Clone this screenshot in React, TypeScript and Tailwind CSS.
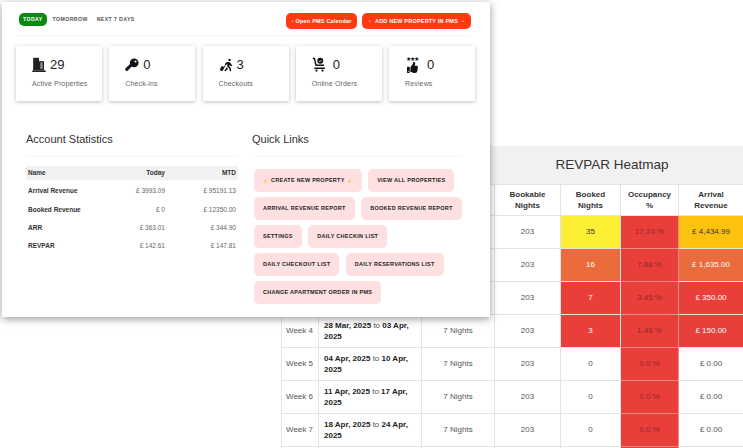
import React from 'react';
import { FaThumbsUp } from 'react-icons/fa';
import { FaPersonWalkingLuggage } from 'react-icons/fa6';

const BuildingIcon = () => (
  <svg viewBox="0 0 16 18" className="w-[14px] h-[15px]" fill="#222">
    <path d="M1 1h7v15H1z" />
    <path d="M8 5h6v11H8z" />
    <path d="M9.5 6.5h3v8h-3z" fill="#888" />
    <path d="M0 16h16v2H0z" />
  </svg>
);

const KeyIcon = () => (
  <svg viewBox="0 0 16 16" className="w-[14px] h-[14px]" fill="#111">
    <circle cx="10.5" cy="5.5" r="5" />
    <circle cx="12" cy="4" r="1.2" fill="#fff" />
    <path d="M7 8L2 13" stroke="#111" strokeWidth="3.4" strokeLinecap="round" />
  </svg>
);

const CartIcon = () => (
  <svg viewBox="0 0 20 20" className="w-[15px] h-[15px]" fill="#111">
    <path d="M1 1h3l2 9h10v2H4.5L2.5 3H1z" />
    <circle cx="11" cy="5" r="4" />
    <path d="M9 5l1.5 1.5L13 4" stroke="#fff" strokeWidth="1" fill="none" />
    <rect x="3" y="14" width="14" height="2" />
    <circle cx="6" cy="18" r="1.5" />
    <circle cx="14" cy="18" r="1.5" />
  </svg>
);

const ReviewIcon = () => (
  <div className="flex flex-col items-center w-[14px]">
    <div className="text-[6px] leading-[5px] text-[#111] tracking-[-1px]">★★★</div>
    <FaThumbsUp className="text-[#111] text-[11px]" />
  </div>
);

const Sparkle = () => (
  <svg viewBox="0 0 12 12" className="w-[6px] h-[6px] shrink-0" fill="#f5c542">
    <path d="M5 2l1.2 3.3L9.5 6.5 6.2 7.7 5 11 3.8 7.7.5 6.5l3.3-1.2z" />
    <path d="M10 0l.6 1.4L12 2l-1.4.6L10 4l-.6-1.4L8 2l1.4-.6z" />
  </svg>
);

const stats = [
  { icon: <BuildingIcon />, value: '29', label: 'Active Properties', iconBox: 'w-[18px]' },
  { icon: <KeyIcon />, value: '0', label: 'Check-ins', iconBox: 'w-[18px]' },
  { icon: <FaPersonWalkingLuggage className="text-[#111] text-[14px]" />, value: '3', label: 'Checkouts', iconBox: 'w-[18px]' },
  { icon: <CartIcon />, value: '0', label: 'Online Orders', iconBox: 'w-[21px]' },
  { icon: <ReviewIcon />, value: '0', label: 'Reviews', iconBox: 'w-[22px]' },
];

const accountRows = [
  ['Arrival Revenue', '£ 3993.09', '£ 95191.13'],
  ['Booked Revenue', '£ 0', '£ 12350.00'],
  ['ARR', '£ 363.01', '£ 344.90'],
  ['REVPAR', '£ 142.61', '£ 147.81'],
];

const quickLinks = [
  ['CREATE NEW PROPERTY', 'VIEW ALL PROPERTIES'],
  ['ARRIVAL REVENUE REPORT', 'BOOKED REVENUE REPORT'],
  ['SETTINGS', 'DAILY CHECKIN LIST'],
  ['DAILY CHECKOUT LIST', 'DAILY RESERVATIONS LIST'],
  ['CHANGE APARTMENT ORDER IN PMS'],
];

const RED = 'bg-[#e93e3a] border-[#f08a86]';

const heatRows = [
  { week: 'Week 1', from: '07 Mar, 2025', to: '13 Mar,', booked: '35', bookedBg: 'bg-[#fdef33] text-[#333]', occ: '17.24 %', rev: '£ 4,434.99', revBg: 'bg-[#fdc20d] text-[#333]' },
  { week: 'Week 2', from: '14 Mar, 2025', to: '20 Mar,', booked: '16', bookedBg: 'bg-[#ea6b3c] text-white', occ: '7.88 %', rev: '£ 1,635.00', revBg: 'bg-[#ea6b3c] text-white' },
  { week: 'Week 3', from: '21 Mar, 2025', to: '27 Mar,', booked: '7', bookedBg: 'bg-[#e93e3a] text-white', occ: '3.45 %', rev: '£ 350.00', revBg: 'bg-[#e93e3a] text-white' },
  { week: 'Week 4', from: '28 Mar, 2025', to: '03 Apr,', booked: '3', bookedBg: 'bg-[#e93e3a] text-white', occ: '1.48 %', rev: '£ 150.00', revBg: 'bg-[#e93e3a] text-white' },
  { week: 'Week 5', from: '04 Apr, 2025', to: '10 Apr,', booked: '0', bookedBg: 'text-[#555]', occ: '0.0 %', rev: '£ 0.00', revBg: 'text-[#555]' },
  { week: 'Week 6', from: '11 Apr, 2025', to: '17 Apr,', booked: '0', bookedBg: 'text-[#555]', occ: '0.0 %', rev: '£ 0.00', revBg: 'text-[#555]' },
  { week: 'Week 7', from: '18 Apr, 2025', to: '24 Apr,', booked: '0', bookedBg: 'text-[#555]', occ: '0.0 %', rev: '£ 0.00', revBg: 'text-[#555]' },
];

const HeatmapPanel = () => (
  <div className="absolute left-[281px] top-[146px] w-[462px] text-[8px]">
    <div className="h-[38px] bg-[#f1f1f1] flex items-center justify-center pl-[200px] text-[13.5px] text-[#333]">
      REVPAR Heatmap
    </div>
    <table className="table-fixed border-collapse w-[462px] text-[#555]">
      <colgroup>
        <col className="w-[37px]" />
        <col className="w-[103px]" />
        <col className="w-[73px]" />
        <col className="w-[66px]" />
        <col className="w-[60px]" />
        <col className="w-[58px]" />
        <col className="w-[65px]" />
      </colgroup>
      <thead>
        <tr className="h-[31px] text-[#333] font-bold leading-[11px] text-center">
          <th className="border border-[#e4e4e4]"></th>
          <th className="border border-[#e4e4e4]"></th>
          <th className="border border-[#e4e4e4]"></th>
          <th className="border border-[#e4e4e4]">Bookable<br />Nights</th>
          <th className="border border-[#e4e4e4]">Booked<br />Nights</th>
          <th className="border border-[#e4e4e4]">Occupancy<br />%</th>
          <th className="border border-[#e4e4e4]">Arrival<br />Revenue</th>
        </tr>
      </thead>
      <tbody>
        {heatRows.map((r) => (
          <tr key={r.week} className="h-[33px] text-center">
            <td className="border border-[#e4e4e4] px-[4px] text-left whitespace-nowrap">{r.week}</td>
            <td className="border border-[#e4e4e4] px-[5px] text-left leading-[11px] text-[#222]">
              <b>{r.from}</b> <span className="text-[#555]">to</span> <b>{r.to} 2025</b>
            </td>
            <td className="border border-[#e4e4e4]">7 Nights</td>
            <td className="border border-[#e4e4e4]">203</td>
            <td className={`border border-[#e4e4e4] ${r.bookedBg}`}>{r.booked}</td>
            <td className={`border ${RED} text-[#8f2a2a]`}>{r.occ}</td>
            <td className={`border border-[#e4e4e4] ${r.revBg}`}>{r.rev}</td>
          </tr>
        ))}
        <tr className="h-[4px]">
          <td className="border border-[#e4e4e4]"></td>
          <td className="border border-[#e4e4e4]"></td>
          <td className="border border-[#e4e4e4]"></td>
          <td className="border border-[#e4e4e4]"></td>
          <td className="border border-[#e4e4e4]"></td>
          <td className={`border ${RED}`}></td>
          <td className="border border-[#e4e4e4]"></td>
        </tr>
      </tbody>
    </table>
  </div>
);

const Dashboard = () => (
  <div className="absolute left-[2px] top-[2px] w-[488px] h-[315px] bg-white shadow-[0_2px_8px_rgba(0,0,0,0.4)] pl-[14px] pr-[2px] pt-[11px]">
    <div className="flex items-start justify-between w-[455px] h-[23px] border-b border-[#f6f6f6]">
      <div className="flex items-center text-[5.2px] font-bold tracking-[0.4px] text-[#555]">
        <span className="bg-[#0b8a12] text-white rounded-[5px] px-[4px] h-[13px] mr-[6px] ml-[3px] flex items-center">TODAY</span>
        <span className="mr-[9px]">TOMORROW</span>
        <span>NEXT 7 DAYS</span>
      </div>
      <div className="flex items-center gap-[5px] text-[5.5px] font-bold tracking-[0.2px] text-white">
        <span className="bg-[#ff3a12] rounded-[5px] h-[16px] w-[71px] flex items-center justify-center"><span className="text-[#ffc04d] mr-[2px]">•</span>Open PMS Calendar</span>
        <span className="bg-[#ff3a12] rounded-[5px] h-[16px] w-[109px] flex items-center justify-center"><span className="text-[#ffc04d] mr-[4px]">•</span>ADD NEW PROPERTY IN PMS<span className="text-[#ffc04d] ml-[4px]">•</span></span>
      </div>
    </div>
    <div className="flex gap-[7.25px] mt-[10px]">
      {stats.map((s) => (
        <div key={s.label} className="w-[86px] h-[55px] shrink-0 bg-white shadow-[0_1px_4px_rgba(0,0,0,0.25)] pl-[16px] pt-[10px]">
          <div className="flex items-center h-[17px]">
            <div className={`${s.iconBox} flex items-center`}>{s.icon}</div>
            <span className="text-[13px] text-[#222]">{s.value}</span>
          </div>
          <div className="mt-[6px] text-[7px] text-[#666] tracking-[0.15px]">{s.label}</div>
        </div>
      ))}
    </div>
    <div className="flex mt-[31px]">
      <div className="w-[213px] ml-[10px]">
        <h2 className="text-[11px] text-[#333] leading-[14px] pb-[10px] border-b border-[#f6f6f6]">Account Statistics</h2>
        <table className="table-fixed w-[212px] mt-[9px] text-[6.5px] text-[#666]">
          <thead>
            <tr className="h-[14px] bg-[#f2f2f2] text-[#333] font-bold">
              <th className="text-left pl-[2px] w-[80px]">Name</th>
              <th className="text-right pr-[2px] w-[61px]">Today</th>
              <th className="text-right pr-[2px]">MTD</th>
            </tr>
          </thead>
          <tbody>
            <tr className="h-[2px]"><td colSpan={3}></td></tr>
            {accountRows.map(([name, today, mtd]) => (
              <tr key={name} className="h-[18.3px]">
                <td className="pl-[2px] font-bold text-[#333]">{name}</td>
                <td className="text-right pr-[2px]">{today}</td>
                <td className="text-right pr-[2px]">{mtd}</td>
              </tr>
            ))}
          </tbody>
        </table>
      </div>
      <div className="w-[211px] ml-[13px]">
        <h2 className="text-[11px] text-[#333] leading-[14px] pb-[10px] border-b border-[#f6f6f6]">Quick Links</h2>
        <div className="mt-[12px] ml-[2px] flex flex-col gap-[5px]">
          {quickLinks.map((row) => (
            <div key={row[0]} className="flex gap-[6.5px]">
              {row.map((l) => (
                <span key={l} className="h-[23px] px-[9px] bg-[#ffe0e0] rounded-[5px] flex items-center gap-[2px] text-[5.5px] font-bold tracking-[0.28px] text-[#222] whitespace-nowrap">
                  {l === 'CREATE NEW PROPERTY' && <Sparkle />}
                  {l}
                  {l === 'CREATE NEW PROPERTY' && <Sparkle />}
                </span>
              ))}
            </div>
          ))}
        </div>
      </div>
    </div>
  </div>
);

export default function App() {
  return (
    <div className="relative w-[743px] h-[448px] overflow-hidden bg-white font-['Liberation_Sans',Arial,sans-serif]">
      <HeatmapPanel />
      <Dashboard />
    </div>
  );
}
